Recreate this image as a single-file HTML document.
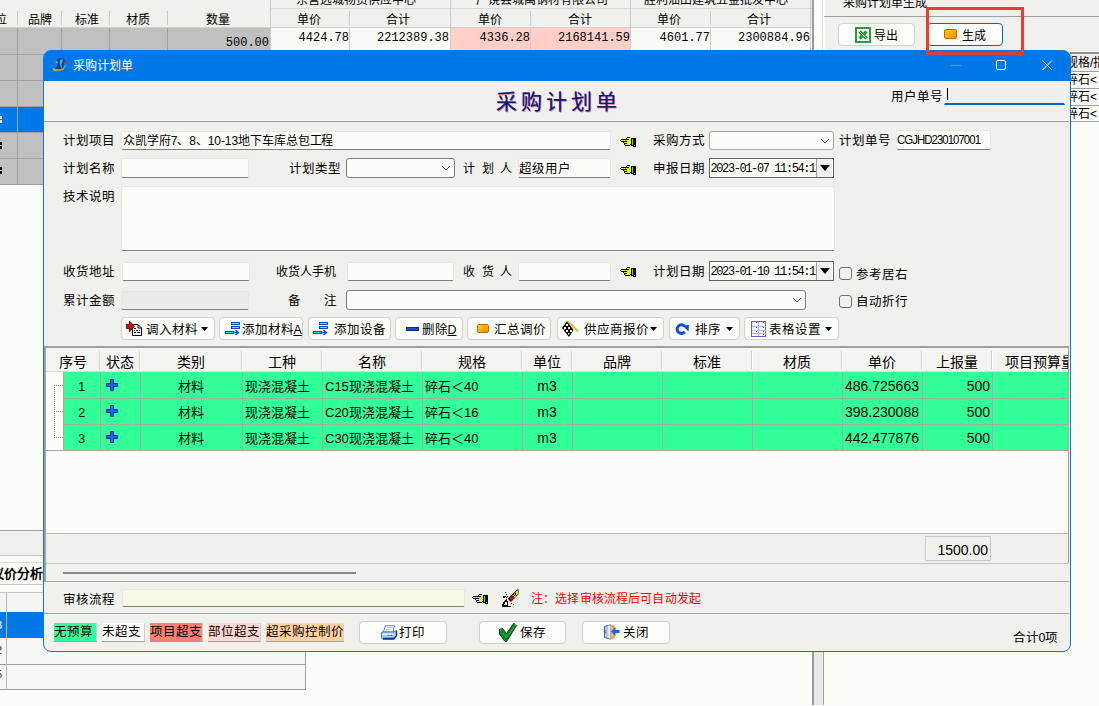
<!DOCTYPE html>
<html lang="zh-CN">
<head>
<meta charset="utf-8">
<style>
*{box-sizing:border-box}
html,body{margin:0;padding:0}
body{width:1099px;height:706px;position:relative;overflow:hidden;background:#fdfdf8;font-family:"Liberation Sans",sans-serif;font-size:12px;color:#000}
.a{position:absolute}
.t{position:absolute;white-space:nowrap;line-height:1}
.hl{position:absolute;height:1px;background:#a0a0a0}
.vl{position:absolute;width:1px;background:#a0a0a0}
.inp{position:absolute;background:#fdfdf8;border:1px solid #e3e3e0;border-bottom:1px solid #7c7c7c;border-radius:2px}
.cmb{position:absolute;background:#fdfdf8;border:1px solid #7a7a7a;border-radius:3px}
.btn{position:absolute;background:#fdfdf9;border:1px solid #d3d3d0;border-radius:4px}
.mono{font-family:"Liberation Mono",monospace}
</style>
</head>
<body>
<!-- ===== background app: left grid ===== -->
<div class="a" style="left:0;top:0;width:812px;height:28px;background:#f0f0ec"></div>
<div class="hl" style="left:270px;top:8px;width:542px;background:#d8d8d4"></div>
<div class="hl" style="left:0;top:27px;width:812px;background:#d0d0cc"></div>
<div class="t" style="left:296px;top:-6px;font-size:12px">东营远城物资供应中心</div>
<div class="t" style="left:476px;top:-6px;font-size:12px">广饶县城禹钢材有限公司</div>
<div class="t" style="left:644px;top:-6px;font-size:12px">胜利油田建筑五金批发中心</div>
<div class="t" style="left:-5px;top:14px">位</div>
<div class="t" style="left:28px;top:14px">品牌</div>
<div class="t" style="left:75px;top:14px">标准</div>
<div class="t" style="left:126px;top:14px">材质</div>
<div class="t" style="left:206px;top:14px">数量</div>
<div class="t" style="left:297px;top:14px">单价</div>
<div class="t" style="left:386px;top:14px">合计</div>
<div class="t" style="left:478px;top:14px">单价</div>
<div class="t" style="left:568px;top:14px">合计</div>
<div class="t" style="left:657px;top:14px">单价</div>
<div class="t" style="left:747px;top:14px">合计</div>
<!-- header separators -->
<div class="vl" style="left:17px;top:11px;height:14px;background:#c8c8c4"></div>
<div class="vl" style="left:61px;top:11px;height:14px;background:#c8c8c4"></div>
<div class="vl" style="left:109px;top:11px;height:14px;background:#c8c8c4"></div>
<div class="vl" style="left:167px;top:11px;height:14px;background:#c8c8c4"></div>
<div class="vl" style="left:270px;top:0;height:28px;background:#c8c8c4"></div>
<div class="vl" style="left:349px;top:11px;height:14px;background:#c8c8c4"></div>
<div class="vl" style="left:450px;top:0;height:28px;background:#c8c8c4"></div>
<div class="vl" style="left:530px;top:11px;height:14px;background:#c8c8c4"></div>
<div class="vl" style="left:630px;top:0;height:28px;background:#c8c8c4"></div>
<div class="vl" style="left:710px;top:11px;height:14px;background:#c8c8c4"></div>
<div class="vl" style="left:810px;top:0;height:28px;background:#c8c8c4"></div>
<!-- data rows -->
<div class="a" style="left:0;top:28px;width:270px;height:156px;background:#c0c0c0"></div>
<div class="a" style="left:0;top:107px;width:270px;height:25px;background:#0078e8"></div>
<div class="a" style="left:270px;top:28px;width:180px;height:22px;background:#fbfbf6"></div>
<div class="a" style="left:450px;top:28px;width:180px;height:22px;background:#ffcfc8"></div>
<div class="a" style="left:630px;top:28px;width:180px;height:22px;background:#fbfbf6"></div>
<div class="hl" style="left:0;top:54px;width:44px"></div>
<div class="hl" style="left:0;top:80px;width:44px"></div>
<div class="hl" style="left:0;top:106px;width:44px"></div>
<div class="hl" style="left:0;top:132px;width:44px"></div>
<div class="hl" style="left:0;top:158px;width:44px"></div>
<div class="hl" style="left:0;top:184px;width:44px"></div>
<div class="vl" style="left:17px;top:28px;height:156px"></div>
<div class="vl" style="left:61px;top:28px;height:22px"></div>
<div class="vl" style="left:109px;top:28px;height:22px"></div>
<div class="vl" style="left:167px;top:28px;height:22px"></div>
<div class="vl" style="left:270px;top:28px;height:22px;background:#d0d0cc"></div>
<div class="vl" style="left:349px;top:28px;height:22px;background:#d0d0cc"></div>
<div class="vl" style="left:450px;top:28px;height:22px;background:#d0d0cc"></div>
<div class="vl" style="left:530px;top:28px;height:22px;background:#d0d0cc"></div>
<div class="vl" style="left:630px;top:28px;height:22px;background:#d0d0cc"></div>
<div class="vl" style="left:710px;top:28px;height:22px;background:#d0d0cc"></div>
<div class="vl" style="left:810px;top:28px;height:22px;background:#d0d0cc"></div>
<div class="t mono" style="left:167px;width:102px;text-align:right;top:37px">500.00</div>
<div class="t mono" style="left:270px;width:79px;text-align:right;top:32px">4424.78</div>
<div class="t mono" style="left:349px;width:100px;text-align:right;top:32px">2212389.38</div>
<div class="t mono" style="left:450px;width:80px;text-align:right;top:32px">4336.28</div>
<div class="t mono" style="left:540px;width:90px;text-align:right;top:32px">2168141.59</div>
<div class="t mono" style="left:630px;width:80px;text-align:right;top:32px">4601.77</div>
<div class="t mono" style="left:710px;width:100px;text-align:right;top:32px">2300884.96</div>

<!-- left strip bottom -->
<div class="a" style="left:0;top:531px;width:44px;height:25px;background:#f0f0ec"></div>
<div class="hl" style="left:0;top:530px;width:44px"></div>
<div class="hl" style="left:0;top:555px;width:44px;background:#c8c8c4"></div>
<div class="hl" style="left:0;top:562px;width:44px;background:#d8d8d4"></div>
<div class="t" style="left:-9px;top:567px;font-weight:bold;font-size:13px">议价分析</div>
<div class="a" style="left:0;top:116px;width:2px;height:3px;background:#fff"></div><div class="a" style="left:0;top:120px;width:2px;height:3px;background:#fff"></div>
<div class="a" style="left:0;top:142px;width:2px;height:3px;background:#000"></div><div class="a" style="left:0;top:146px;width:2px;height:3px;background:#000"></div>
<div class="a" style="left:0;top:167px;width:2px;height:3px;background:#000"></div><div class="a" style="left:0;top:171px;width:2px;height:3px;background:#000"></div>
<div class="hl" style="left:0;top:584px;width:44px;background:#c8c8c4"></div>
<div class="hl" style="left:0;top:592px;width:44px;background:#c8c8c4"></div>
<div class="a" style="left:0;top:593px;width:44px;height:19px;background:#f5f5f1"></div>
<div class="a" style="left:0;top:612px;width:305px;height:26px;background:#0078e8"></div>
<div class="a" style="left:0;top:638px;width:305px;height:52px;background:#f6f6f2"></div>
<div class="hl" style="left:0;top:664px;width:305px"></div>
<div class="hl" style="left:0;top:689px;width:306px"></div>
<div class="vl" style="left:6px;top:593px;height:97px;background:#b8b8b4"></div>
<div class="vl" style="left:305px;top:638px;height:52px"></div>

<div class="t" style="left:-4px;top:620px;font-size:11px;color:#fff">3</div>
<div class="t" style="left:-4px;top:645px;font-size:11px;color:#333">2</div>
<div class="t" style="left:-4px;top:669px;font-size:11px;color:#333">5</div>
<!-- splitter -->
<div class="a" style="left:812px;top:0;width:2px;height:705px;background:#9a9a9a"></div>
<div class="a" style="left:814px;top:651px;width:9px;height:54px;background:#e8e8e6"></div>
<div class="vl" style="left:822px;top:0;height:651px;background:#e0e0dc"></div>
<div class="vl" style="left:823px;top:651px;height:54px;background:#a0a0a0"></div>

<!-- right panel -->
<div class="a" style="left:825px;top:0;width:274px;height:52px;background:#f0f0ec"></div>
<div class="hl" style="left:824px;top:16px;width:275px;background:#a0a0a0"></div>
<div class="t" style="left:843px;top:-3px">采购计划单生成</div>
<div class="btn" style="left:838px;top:23px;width:77px;height:23px"></div>
<div class="t" style="left:874px;top:30px">导出</div>
<div class="btn" style="left:927px;top:23px;width:76px;height:23px;border:1px solid #0067c0"></div>
<div class="a" style="left:944px;top:29px;width:13px;height:10px;border-radius:2px;background:linear-gradient(135deg,#ffd000,#ff8c00);border:1px solid #d06000"></div>
<div class="t" style="left:962px;top:30px">生成</div>
<svg class="a" style="left:855px;top:27px" width="16" height="16" viewBox="0 0 16 16">
<rect x="1" y="1" width="14" height="14" fill="#fff" stroke="#2a9a3a" stroke-width="2"/>
<path d="M4.5 4.5 L11.5 11.5 M11.5 4.5 L4.5 11.5" stroke="#2a9a3a" stroke-width="3.2"/>
<path d="M4 4 L10.5 10.5" stroke="#f0fff0" stroke-width="0.9"/>
</svg>
<!-- right grid -->
<div class="a" style="left:1070px;top:52px;width:29px;height:2px;background:#909090"></div>
<div class="a" style="left:1070px;top:54px;width:29px;height:17px;background:#f0f0ec"></div>
<div class="hl" style="left:1070px;top:71px;width:29px"></div>
<div class="hl" style="left:1070px;top:88px;width:29px"></div>
<div class="hl" style="left:1070px;top:105px;width:29px"></div>
<div class="hl" style="left:1070px;top:121px;width:29px"></div>
<div class="t" style="left:1066px;top:57px">规格/指</div>
<div class="t" style="left:1066px;top:74px">碎石&lt;</div>
<div class="t" style="left:1066px;top:91px">碎石&lt;</div>
<div class="t" style="left:1066px;top:108px">碎石&lt;</div>

<!-- red highlight -->


<div class="a" style="left:43px;top:50px;width:1028px;height:602px;border:1px solid #0a78e0;border-radius:8px;background:linear-gradient(#0078e8 0 30px,#f0f0ec 30px)"></div>
<svg class="a" style="left:52px;top:56px" width="18" height="18" viewBox="0 0 18 18">
<path d="M7 2.5 C10 2 13 2.5 12.8 4.5 C12.5 6.5 11 8 11.5 10 C12 12 10.5 14 8.5 14 C6 14 4.5 13 4.5 11.5 C4.5 10 6 9.5 5 8 C4 6.5 4 4 7 2.5 Z" fill="#0c3484"/>
<path d="M8.8 3.3 C10.8 3 11.8 4 10.8 5.5 C9.8 7 9.3 8 9.8 10 C10.3 11.5 9.8 12.8 8.8 13.2 C9.3 11.5 8.3 10 7.8 8.5 C7.3 7 7.3 4.5 8.8 3.3 Z" fill="#22b4f0"/>
<ellipse cx="4.9" cy="6.3" rx="0.9" ry="1.4" fill="#48c8ff"/>
<path d="M1 11.8 L1.2 14.3 L2.5 15 L9 14.6 L11.5 13.2 L14 9.4 L13.4 9 L11 12.2 L9 13.2 L3.2 13.6 L2 12.8 Z" fill="#ffb400"/>
<circle cx="14.3" cy="6.4" r="1.2" fill="#f02020"/>
</svg>
<div class="t" style="left:73px;top:59.995px;font-size:12.01px;color:#fff;">采购计划单</div>
<div class="a" style="left:951px;top:65px;width:10px;height:1px;background:#4d9de6"></div>
<div class="a" style="left:996px;top:60px;width:10px;height:10px;border:1px solid #fff;border-radius:2px"></div>
<svg class="a" style="left:1042px;top:60px" width="11" height="11"><path d="M0.5 0.5 L10 10 M10 0.5 L0.5 10" stroke="#fff" stroke-width="1"/></svg>
<div class="a" style="left:44px;top:121px;width:1025px;height:1px;background:#a0a0a0"></div>
<div class="a" style="left:44px;top:120px;width:1025px;height:1px;background:#f8f8f5"></div>
<div class="t" style="left:496px;top:92px;font-family:'Liberation Serif',serif;font-size:21px;font-weight:500;color:#18187a;letter-spacing:4px;text-shadow:0.3px 0 0 rgba(24,24,122,0.7),0.8px 0.6px 0 rgba(200,30,70,0.45)">采购计划单</div>
<div class="t" style="left:890.5px;top:91.0px;font-size:12.5px;color:#000;">用户单号</div>
<div class="a" style="left:944px;top:86px;width:121px;height:19px;background:#efefeb;border:1px solid #fafaf8;border-bottom:2px solid #0067c0"></div>
<div class="a" style="left:947px;top:88px;width:1px;height:12px;background:#000"></div>
<div class="t" style="left:62.5px;top:134.5px;font-size:12.5px;color:#000;">计划项目</div>
<div class="a" style="left:121px;top:131px;width:490px;height:19px;background:#fdfdf8;border:1px solid #e6e6e2;border-bottom:1px solid #7f7f7f;border-radius:2px"></div>
<div class="t" style="left:123px;top:134.995px;font-size:12.01px;color:#000;letter-spacing:-0.08px">众凯学府7、8、10-13地下车库总包工程</div>
<svg class="a" style="left:620px;top:137px" width="16" height="10" viewBox="0 0 16 10" shape-rendering="crispEdges"><rect x="7" y="0" width="3" height="1" fill="#000"/><rect x="6" y="1" width="1" height="1" fill="#000"/><rect x="7" y="1" width="1" height="1" fill="#d4f000"/><rect x="8" y="1" width="1" height="1" fill="#f4fab0"/><rect x="9" y="1" width="1" height="1" fill="#d4f000"/><rect x="11" y="1" width="5" height="1" fill="#000"/><rect x="1" y="2" width="8" height="1" fill="#000"/><rect x="9" y="2" width="2" height="1" fill="#d4f000"/><rect x="11" y="2" width="1" height="1" fill="#000"/><rect x="12" y="2" width="1" height="1" fill="#00eef8"/><rect x="13" y="2" width="3" height="1" fill="#000"/><rect x="0" y="3" width="1" height="1" fill="#000"/><rect x="1" y="3" width="1" height="1" fill="#d4f000"/><rect x="2" y="3" width="1" height="1" fill="#f4fab0"/><rect x="3" y="3" width="1" height="1" fill="#d4f000"/><rect x="4" y="3" width="1" height="1" fill="#f4fab0"/><rect x="5" y="3" width="1" height="1" fill="#d4f000"/><rect x="6" y="3" width="1" height="1" fill="#f4fab0"/><rect x="7" y="3" width="4" height="1" fill="#d4f000"/><rect x="11" y="3" width="1" height="1" fill="#000"/><rect x="12" y="3" width="1" height="1" fill="#00eef8"/><rect x="13" y="3" width="3" height="1" fill="#000"/><rect x="1" y="4" width="6" height="1" fill="#000"/><rect x="7" y="4" width="1" height="1" fill="#d4f000"/><rect x="8" y="4" width="1" height="1" fill="#f4fab0"/><rect x="9" y="4" width="1" height="1" fill="#d4f000"/><rect x="10" y="4" width="1" height="1" fill="#f4fab0"/><rect x="11" y="4" width="1" height="1" fill="#000"/><rect x="12" y="4" width="1" height="1" fill="#00eef8"/><rect x="13" y="4" width="3" height="1" fill="#000"/><rect x="3" y="5" width="1" height="1" fill="#000"/><rect x="4" y="5" width="1" height="1" fill="#d4f000"/><rect x="5" y="5" width="1" height="1" fill="#f4fab0"/><rect x="6" y="5" width="1" height="1" fill="#d4f000"/><rect x="7" y="5" width="1" height="1" fill="#f4fab0"/><rect x="8" y="5" width="1" height="1" fill="#d4f000"/><rect x="9" y="5" width="1" height="1" fill="#f4fab0"/><rect x="10" y="5" width="1" height="1" fill="#d4f000"/><rect x="11" y="5" width="1" height="1" fill="#000"/><rect x="12" y="5" width="1" height="1" fill="#00eef8"/><rect x="13" y="5" width="3" height="1" fill="#000"/><rect x="4" y="6" width="3" height="1" fill="#000"/><rect x="7" y="6" width="1" height="1" fill="#d4f000"/><rect x="8" y="6" width="1" height="1" fill="#f4fab0"/><rect x="9" y="6" width="1" height="1" fill="#d4f000"/><rect x="10" y="6" width="1" height="1" fill="#f4fab0"/><rect x="11" y="6" width="1" height="1" fill="#000"/><rect x="12" y="6" width="1" height="1" fill="#00eef8"/><rect x="13" y="6" width="3" height="1" fill="#000"/><rect x="4" y="7" width="1" height="1" fill="#000"/><rect x="5" y="7" width="1" height="1" fill="#d4f000"/><rect x="6" y="7" width="1" height="1" fill="#f4fab0"/><rect x="7" y="7" width="1" height="1" fill="#d4f000"/><rect x="8" y="7" width="1" height="1" fill="#f4fab0"/><rect x="9" y="7" width="1" height="1" fill="#d4f000"/><rect x="10" y="7" width="2" height="1" fill="#000"/><rect x="12" y="7" width="1" height="1" fill="#00eef8"/><rect x="13" y="7" width="3" height="1" fill="#000"/><rect x="5" y="8" width="5" height="1" fill="#000"/><rect x="11" y="8" width="3" height="1" fill="#000"/><rect x="14" y="8" width="1" height="1" fill="#d4f000"/><rect x="15" y="8" width="1" height="1" fill="#000"/><rect x="13" y="9" width="3" height="1" fill="#000"/></svg>
<div class="t" style="left:652.5px;top:134.5px;font-size:12.5px;color:#000;">采购方式</div>
<div class="a" style="left:709px;top:131px;width:125px;height:19px;background:#fdfdf8;border:1px solid #a4a4a0;border-radius:3px"></div>
<svg class="a" style="left:820px;top:137.5px" width="10" height="6"><path d="M1 1 L5 5 L9 1" fill="none" stroke="#505050" stroke-width="1"/></svg>
<div class="t" style="left:838.5px;top:134.5px;font-size:12.5px;color:#000;">计划单号</div>
<div class="a" style="left:896px;top:130px;width:95px;height:20px;background:#fdfdf8;border:1px solid #e6e6e2;border-bottom:1px solid #7f7f7f;border-radius:2px"></div>
<div class="t" style="left:897px;top:134px;font-size:12px;letter-spacing:-1px;transform:scaleX(0.95);transform-origin:0 0">CGJHD230107001</div>
<div class="t" style="left:62.5px;top:162.5px;font-size:12.5px;color:#000;">计划名称</div>
<div class="a" style="left:121px;top:158px;width:128px;height:20px;background:#fdfdf8;border:1px solid #e6e6e2;border-bottom:1px solid #7f7f7f;border-radius:2px"></div>
<div class="t" style="left:288.5px;top:162.5px;font-size:12.5px;color:#000;">计划类型</div>
<div class="a" style="left:346px;top:158px;width:109px;height:20px;background:#fdfdf8;border:1px solid #7a7a7a;border-radius:3px"></div>
<svg class="a" style="left:441px;top:165.0px" width="10" height="6"><path d="M1 1 L5 5 L9 1" fill="none" stroke="#505050" stroke-width="1"/></svg>
<div class="t" style="left:463px;top:162.995px;font-size:12.01px;color:#000;">计&nbsp;&nbsp;划&nbsp;&nbsp;人</div>
<div class="a" style="left:518px;top:158px;width:93px;height:20px;background:#fdfdf8;border:1px solid #e6e6e2;border-bottom:1px solid #7f7f7f;border-radius:2px"></div>
<div class="t" style="left:518.5px;top:162.5px;font-size:12.5px;color:#000;">超级用户</div>
<svg class="a" style="left:620px;top:165px" width="16" height="10" viewBox="0 0 16 10" shape-rendering="crispEdges"><rect x="7" y="0" width="3" height="1" fill="#000"/><rect x="6" y="1" width="1" height="1" fill="#000"/><rect x="7" y="1" width="1" height="1" fill="#d4f000"/><rect x="8" y="1" width="1" height="1" fill="#f4fab0"/><rect x="9" y="1" width="1" height="1" fill="#d4f000"/><rect x="11" y="1" width="5" height="1" fill="#000"/><rect x="1" y="2" width="8" height="1" fill="#000"/><rect x="9" y="2" width="2" height="1" fill="#d4f000"/><rect x="11" y="2" width="1" height="1" fill="#000"/><rect x="12" y="2" width="1" height="1" fill="#00eef8"/><rect x="13" y="2" width="3" height="1" fill="#000"/><rect x="0" y="3" width="1" height="1" fill="#000"/><rect x="1" y="3" width="1" height="1" fill="#d4f000"/><rect x="2" y="3" width="1" height="1" fill="#f4fab0"/><rect x="3" y="3" width="1" height="1" fill="#d4f000"/><rect x="4" y="3" width="1" height="1" fill="#f4fab0"/><rect x="5" y="3" width="1" height="1" fill="#d4f000"/><rect x="6" y="3" width="1" height="1" fill="#f4fab0"/><rect x="7" y="3" width="4" height="1" fill="#d4f000"/><rect x="11" y="3" width="1" height="1" fill="#000"/><rect x="12" y="3" width="1" height="1" fill="#00eef8"/><rect x="13" y="3" width="3" height="1" fill="#000"/><rect x="1" y="4" width="6" height="1" fill="#000"/><rect x="7" y="4" width="1" height="1" fill="#d4f000"/><rect x="8" y="4" width="1" height="1" fill="#f4fab0"/><rect x="9" y="4" width="1" height="1" fill="#d4f000"/><rect x="10" y="4" width="1" height="1" fill="#f4fab0"/><rect x="11" y="4" width="1" height="1" fill="#000"/><rect x="12" y="4" width="1" height="1" fill="#00eef8"/><rect x="13" y="4" width="3" height="1" fill="#000"/><rect x="3" y="5" width="1" height="1" fill="#000"/><rect x="4" y="5" width="1" height="1" fill="#d4f000"/><rect x="5" y="5" width="1" height="1" fill="#f4fab0"/><rect x="6" y="5" width="1" height="1" fill="#d4f000"/><rect x="7" y="5" width="1" height="1" fill="#f4fab0"/><rect x="8" y="5" width="1" height="1" fill="#d4f000"/><rect x="9" y="5" width="1" height="1" fill="#f4fab0"/><rect x="10" y="5" width="1" height="1" fill="#d4f000"/><rect x="11" y="5" width="1" height="1" fill="#000"/><rect x="12" y="5" width="1" height="1" fill="#00eef8"/><rect x="13" y="5" width="3" height="1" fill="#000"/><rect x="4" y="6" width="3" height="1" fill="#000"/><rect x="7" y="6" width="1" height="1" fill="#d4f000"/><rect x="8" y="6" width="1" height="1" fill="#f4fab0"/><rect x="9" y="6" width="1" height="1" fill="#d4f000"/><rect x="10" y="6" width="1" height="1" fill="#f4fab0"/><rect x="11" y="6" width="1" height="1" fill="#000"/><rect x="12" y="6" width="1" height="1" fill="#00eef8"/><rect x="13" y="6" width="3" height="1" fill="#000"/><rect x="4" y="7" width="1" height="1" fill="#000"/><rect x="5" y="7" width="1" height="1" fill="#d4f000"/><rect x="6" y="7" width="1" height="1" fill="#f4fab0"/><rect x="7" y="7" width="1" height="1" fill="#d4f000"/><rect x="8" y="7" width="1" height="1" fill="#f4fab0"/><rect x="9" y="7" width="1" height="1" fill="#d4f000"/><rect x="10" y="7" width="2" height="1" fill="#000"/><rect x="12" y="7" width="1" height="1" fill="#00eef8"/><rect x="13" y="7" width="3" height="1" fill="#000"/><rect x="5" y="8" width="5" height="1" fill="#000"/><rect x="11" y="8" width="3" height="1" fill="#000"/><rect x="14" y="8" width="1" height="1" fill="#d4f000"/><rect x="15" y="8" width="1" height="1" fill="#000"/><rect x="13" y="9" width="3" height="1" fill="#000"/></svg>
<div class="t" style="left:652.5px;top:162.5px;font-size:12.5px;color:#000;">申报日期</div>
<div class="a" style="left:709px;top:158px;width:125px;height:20px;background:#fdfdf8;border:1px solid #646464"></div>
<div class="t mono" style="left:710.5px;top:162.5px;font-size:12px;width:106px;overflow:hidden;letter-spacing:-1.4px">2023-01-07 11:54:1</div>
<div class="a" style="left:816px;top:159px;width:17px;height:18px;background:#f0f0ec;border-left:1px solid #a0a0a0;border-right:1px solid #fff"></div>
<svg class="a" style="left:820px;top:165.0px" width="11" height="7"><path d="M0 0 H10 L5 6 Z" fill="#000"/></svg>
<div class="t" style="left:62.5px;top:190.5px;font-size:12.5px;color:#000;">技术说明</div>
<div class="a" style="left:121px;top:186px;width:714px;height:65px;background:#fdfdf8;border:1px solid #e6e6e2;border-bottom:1px solid #7f7f7f;border-radius:2px"></div>
<div class="t" style="left:62.5px;top:265.5px;font-size:12.5px;color:#000;">收货地址</div>
<div class="a" style="left:122px;top:262px;width:128px;height:19px;background:#fdfdf8;border:1px solid #e6e6e2;border-bottom:1px solid #7f7f7f;border-radius:2px"></div>
<div class="t" style="left:276px;top:265.995px;font-size:12.01px;color:#000;">收货人手机</div>
<div class="a" style="left:347px;top:262px;width:107px;height:19px;background:#fdfdf8;border:1px solid #e6e6e2;border-bottom:1px solid #7f7f7f;border-radius:2px"></div>
<div class="t" style="left:463px;top:265.995px;font-size:12.01px;color:#000;">收&nbsp;&nbsp;货&nbsp;&nbsp;人</div>
<div class="a" style="left:518px;top:262px;width:93px;height:19px;background:#fdfdf8;border:1px solid #e6e6e2;border-bottom:1px solid #7f7f7f;border-radius:2px"></div>
<svg class="a" style="left:620px;top:267px" width="16" height="10" viewBox="0 0 16 10" shape-rendering="crispEdges"><rect x="7" y="0" width="3" height="1" fill="#000"/><rect x="6" y="1" width="1" height="1" fill="#000"/><rect x="7" y="1" width="1" height="1" fill="#d4f000"/><rect x="8" y="1" width="1" height="1" fill="#f4fab0"/><rect x="9" y="1" width="1" height="1" fill="#d4f000"/><rect x="11" y="1" width="5" height="1" fill="#000"/><rect x="1" y="2" width="8" height="1" fill="#000"/><rect x="9" y="2" width="2" height="1" fill="#d4f000"/><rect x="11" y="2" width="1" height="1" fill="#000"/><rect x="12" y="2" width="1" height="1" fill="#00eef8"/><rect x="13" y="2" width="3" height="1" fill="#000"/><rect x="0" y="3" width="1" height="1" fill="#000"/><rect x="1" y="3" width="1" height="1" fill="#d4f000"/><rect x="2" y="3" width="1" height="1" fill="#f4fab0"/><rect x="3" y="3" width="1" height="1" fill="#d4f000"/><rect x="4" y="3" width="1" height="1" fill="#f4fab0"/><rect x="5" y="3" width="1" height="1" fill="#d4f000"/><rect x="6" y="3" width="1" height="1" fill="#f4fab0"/><rect x="7" y="3" width="4" height="1" fill="#d4f000"/><rect x="11" y="3" width="1" height="1" fill="#000"/><rect x="12" y="3" width="1" height="1" fill="#00eef8"/><rect x="13" y="3" width="3" height="1" fill="#000"/><rect x="1" y="4" width="6" height="1" fill="#000"/><rect x="7" y="4" width="1" height="1" fill="#d4f000"/><rect x="8" y="4" width="1" height="1" fill="#f4fab0"/><rect x="9" y="4" width="1" height="1" fill="#d4f000"/><rect x="10" y="4" width="1" height="1" fill="#f4fab0"/><rect x="11" y="4" width="1" height="1" fill="#000"/><rect x="12" y="4" width="1" height="1" fill="#00eef8"/><rect x="13" y="4" width="3" height="1" fill="#000"/><rect x="3" y="5" width="1" height="1" fill="#000"/><rect x="4" y="5" width="1" height="1" fill="#d4f000"/><rect x="5" y="5" width="1" height="1" fill="#f4fab0"/><rect x="6" y="5" width="1" height="1" fill="#d4f000"/><rect x="7" y="5" width="1" height="1" fill="#f4fab0"/><rect x="8" y="5" width="1" height="1" fill="#d4f000"/><rect x="9" y="5" width="1" height="1" fill="#f4fab0"/><rect x="10" y="5" width="1" height="1" fill="#d4f000"/><rect x="11" y="5" width="1" height="1" fill="#000"/><rect x="12" y="5" width="1" height="1" fill="#00eef8"/><rect x="13" y="5" width="3" height="1" fill="#000"/><rect x="4" y="6" width="3" height="1" fill="#000"/><rect x="7" y="6" width="1" height="1" fill="#d4f000"/><rect x="8" y="6" width="1" height="1" fill="#f4fab0"/><rect x="9" y="6" width="1" height="1" fill="#d4f000"/><rect x="10" y="6" width="1" height="1" fill="#f4fab0"/><rect x="11" y="6" width="1" height="1" fill="#000"/><rect x="12" y="6" width="1" height="1" fill="#00eef8"/><rect x="13" y="6" width="3" height="1" fill="#000"/><rect x="4" y="7" width="1" height="1" fill="#000"/><rect x="5" y="7" width="1" height="1" fill="#d4f000"/><rect x="6" y="7" width="1" height="1" fill="#f4fab0"/><rect x="7" y="7" width="1" height="1" fill="#d4f000"/><rect x="8" y="7" width="1" height="1" fill="#f4fab0"/><rect x="9" y="7" width="1" height="1" fill="#d4f000"/><rect x="10" y="7" width="2" height="1" fill="#000"/><rect x="12" y="7" width="1" height="1" fill="#00eef8"/><rect x="13" y="7" width="3" height="1" fill="#000"/><rect x="5" y="8" width="5" height="1" fill="#000"/><rect x="11" y="8" width="3" height="1" fill="#000"/><rect x="14" y="8" width="1" height="1" fill="#d4f000"/><rect x="15" y="8" width="1" height="1" fill="#000"/><rect x="13" y="9" width="3" height="1" fill="#000"/></svg>
<div class="t" style="left:652.5px;top:265.5px;font-size:12.5px;color:#000;">计划日期</div>
<div class="a" style="left:709px;top:261px;width:125px;height:20px;background:#fdfdf8;border:1px solid #646464"></div>
<div class="t mono" style="left:710.5px;top:265.5px;font-size:12px;width:106px;overflow:hidden;letter-spacing:-1.4px">2023-01-10 11:54:1</div>
<div class="a" style="left:816px;top:262px;width:17px;height:18px;background:#f0f0ec;border-left:1px solid #a0a0a0;border-right:1px solid #fff"></div>
<svg class="a" style="left:820px;top:268.0px" width="11" height="7"><path d="M0 0 H10 L5 6 Z" fill="#000"/></svg>
<div class="a" style="left:839px;top:267px;width:13px;height:13px;background:#f0f0ec;border:1px solid #707070;border-radius:3px"></div>
<div class="t" style="left:855.5px;top:268.5px;font-size:12.5px;color:#000;">参考居右</div>
<div class="t" style="left:62.5px;top:294.5px;font-size:12.5px;color:#000;">累计金额</div>
<div class="a" style="left:121px;top:291px;width:128px;height:19px;background:#ebebe7;border:1px solid #e6e6e2;border-bottom:1px solid #7f7f7f;border-radius:2px"></div>
<div class="t" style="left:287.5px;top:294.5px;font-size:12.5px;color:#000;">备</div>
<div class="t" style="left:323.5px;top:294.5px;font-size:12.5px;color:#000;">注</div>
<div class="a" style="left:346px;top:290px;width:460px;height:20px;background:#fdfdf8;border:1px solid #7a7a7a;border-radius:3px"></div>
<svg class="a" style="left:792px;top:297.0px" width="10" height="6"><path d="M1 1 L5 5 L9 1" fill="none" stroke="#505050" stroke-width="1"/></svg>
<div class="a" style="left:839px;top:295px;width:13px;height:13px;background:#f0f0ec;border:1px solid #707070;border-radius:3px"></div>
<div class="t" style="left:855.5px;top:295.5px;font-size:12.5px;color:#000;">自动折行</div>
<div class="a" style="left:121px;top:317px;width:94px;height:23px;background:#fdfdf9;border:1px solid #d0d0cc;border-radius:4px"></div>
<div class="t" style="left:145.5px;top:323.5px;font-size:12.5px;color:#000;">调入材料</div>
<svg class="a" style="left:201px;top:327px" width="8" height="4"><path d="M0 0 H7 L3.5 4 Z" fill="#000"/></svg>
<div class="a" style="left:219px;top:317px;width:84px;height:23px;background:#fdfdf9;border:1px solid #d0d0cc;border-radius:4px"></div>
<div class="t" style="left:241.5px;top:323.5px;font-size:12.5px;color:#000;">添加材料<u>A</u></div>
<div class="a" style="left:308px;top:317px;width:83px;height:23px;background:#fdfdf9;border:1px solid #d0d0cc;border-radius:4px"></div>
<div class="t" style="left:333.5px;top:323.5px;font-size:12.5px;color:#000;">添加设备</div>
<div class="a" style="left:395px;top:317px;width:68px;height:23px;background:#fdfdf9;border:1px solid #d0d0cc;border-radius:4px"></div>
<div class="t" style="left:421.5px;top:323.5px;font-size:12.5px;color:#000;">删除<u>D</u></div>
<div class="a" style="left:467px;top:317px;width:84px;height:23px;background:#fdfdf9;border:1px solid #d0d0cc;border-radius:4px"></div>
<div class="t" style="left:493.5px;top:323.5px;font-size:12.5px;color:#000;">汇总调价</div>
<div class="a" style="left:557px;top:317px;width:107px;height:23px;background:#fdfdf9;border:1px solid #d0d0cc;border-radius:4px"></div>
<div class="t" style="left:583.5px;top:323.5px;font-size:12.5px;color:#000;">供应商报价</div>
<svg class="a" style="left:650px;top:327px" width="8" height="4"><path d="M0 0 H7 L3.5 4 Z" fill="#000"/></svg>
<div class="a" style="left:669px;top:317px;width:71px;height:23px;background:#fdfdf9;border:1px solid #d0d0cc;border-radius:4px"></div>
<div class="t" style="left:694.5px;top:323.5px;font-size:12.5px;color:#000;">排序</div>
<svg class="a" style="left:726px;top:327px" width="8" height="4"><path d="M0 0 H7 L3.5 4 Z" fill="#000"/></svg>
<div class="a" style="left:744px;top:317px;width:95px;height:23px;background:#fdfdf9;border:1px solid #d0d0cc;border-radius:4px"></div>
<div class="t" style="left:768.5px;top:323.5px;font-size:12.5px;color:#000;">表格设置</div>
<svg class="a" style="left:825px;top:327px" width="8" height="4"><path d="M0 0 H7 L3.5 4 Z" fill="#000"/></svg>
<svg class="a" style="left:122px;top:318px" width="24" height="22" viewBox="0 0 24 22">
<path d="M10.5 6.5 H16 L19.5 10 V17.5 H10.5 Z" fill="#fff" stroke="#000" stroke-width="1"/>
<path d="M16 6.5 V10 H19.5" fill="none" stroke="#000" stroke-width="1"/>
<path d="M12 10.5 H14 M12 12.5 H13 M14 12.5 H16 M17 12.5 H18 M12 14.5 H14 M15 14.5 H18" stroke="#000" stroke-width="1"/>
<path d="M4.5 6.2 H7.5 V3 L12.5 8.3 L7.5 13.7 V10.5 H4.5 Z" fill="#f00000" stroke="#000" stroke-width="0.7"/>
</svg>
<svg class="a" style="left:225px;top:321px" width="16" height="15" viewBox="0 0 16 15">
<rect x="6.5" y="1.5" width="8" height="2" fill="#8cd0ff" stroke="#0a48d0" stroke-width="1"/>
<rect x="6.5" y="5.5" width="8" height="2" fill="#8cd0ff" stroke="#0a48d0" stroke-width="1"/>
<rect x="0.5" y="10.5" width="8" height="2" fill="#00f0ff" stroke="#0a48d0" stroke-width="1"/>
<path d="M8.5 11.5 H13 M10.5 9 L13.5 11.5 L10.5 14" fill="none" stroke="#0a48d0" stroke-width="1.3"/>
</svg>
<svg class="a" style="left:313px;top:321px" width="16" height="15" viewBox="0 0 16 15">
<rect x="6.5" y="1.5" width="8" height="2" fill="#8cd0ff" stroke="#0a48d0" stroke-width="1"/>
<rect x="6.5" y="5.5" width="8" height="2" fill="#8cd0ff" stroke="#0a48d0" stroke-width="1"/>
<rect x="0.5" y="10.5" width="8" height="2" fill="#00f0ff" stroke="#0a48d0" stroke-width="1"/>
<path d="M8.5 11.5 H13 M10.5 9 L13.5 11.5 L10.5 14" fill="none" stroke="#0a48d0" stroke-width="1.3"/>
</svg>
<div class="a" style="left:406px;top:327px;width:13px;height:4px;background:#1a50c8;border:1px solid #0a2a90"></div>
<div class="a" style="left:477px;top:324px;width:12px;height:9px;border-radius:2px;background:linear-gradient(135deg,#ffd020,#ff8a00);border:1px solid #d86800"></div>
<svg class="a" style="left:558px;top:318px" width="24" height="22" viewBox="0 0 24 22">
<polygon points="9,3 4,10 11,19 15.5,12" fill="#000"/>
<path d="M8 6h2v2h-2z M6 9h2v2h-2z M10 9h2v2h-2z M8 12h2v2h-2z M12 12h2v2h-2z M10 15h1.5v1.5h-1.5z M5.5 11h1v1h-1z" fill="#fff"/>
<path d="M9.5 3 L20 13.5" stroke="#f0b030" stroke-width="1.8"/>
</svg>
<svg class="a" style="left:674px;top:322px" width="17" height="14" viewBox="0 0 17 14">
<path d="M10.5 4.2 A4.3 4.3 0 1 0 10.8 9.8" fill="none" stroke="#0a50d8" stroke-width="3"/>
<path d="M8.5 3.5 L15 3 L14.5 9.5 Z" fill="#0a50d8"/>
</svg>
<svg class="a" style="left:751px;top:321px" width="16" height="16" viewBox="0 0 16 16" shape-rendering="crispEdges">
<rect x="0.5" y="0.5" width="14" height="15" fill="#fff" stroke="#6a5ad0"/>
<rect x="7" y="1" width="1" height="14" fill="#b8b0e8"/>
<rect x="1" y="5" width="14" height="1" fill="#b8b0e8"/><rect x="1" y="9" width="14" height="1" fill="#b8b0e8"/><rect x="1" y="12" width="14" height="1" fill="#b8b0e8"/>
<rect x="5" y="1" width="1" height="1" fill="#e00000"/><rect x="12" y="1" width="1" height="1" fill="#e00000"/>
<rect x="5" y="6" width="1" height="1" fill="#e00000"/><rect x="12" y="6" width="1" height="1" fill="#e00000"/>
<rect x="5" y="10" width="1" height="1" fill="#e00000"/><rect x="12" y="10" width="1" height="1" fill="#e00000"/>
<rect x="12" y="13" width="1" height="1" fill="#e00000"/>
</svg>
<div class="a" style="left:44px;top:346px;width:1025px;height:2px;background:#a0a0a0"></div>
<div class="a" style="left:44px;top:346px;width:2px;height:235px;background:#a0a0a0"></div>
<div class="a" style="left:46px;top:348px;width:1022px;height:24px;background:#f4f4f0"></div>
<div class="a" style="left:46px;top:371px;width:1022px;height:1px;background:#dcdcd8"></div>
<div class="a" style="left:46px;top:372px;width:1022px;height:161px;background:#fdfdf8"></div>
<div class="t" style="left:46px;width:54px;text-align:center;top:355.0px;font-size:14px;color:#000;">序号</div>
<div class="t" style="left:100px;width:40px;text-align:center;top:355.0px;font-size:14px;color:#000;">状态</div>
<div class="t" style="left:140px;width:102px;text-align:center;top:355.0px;font-size:14px;color:#000;">类别</div>
<div class="t" style="left:242px;width:80px;text-align:center;top:355.0px;font-size:14px;color:#000;">工种</div>
<div class="t" style="left:322px;width:100px;text-align:center;top:355.0px;font-size:14px;color:#000;">名称</div>
<div class="t" style="left:422px;width:100px;text-align:center;top:355.0px;font-size:14px;color:#000;">规格</div>
<div class="t" style="left:522px;width:50px;text-align:center;top:355.0px;font-size:14px;color:#000;">单位</div>
<div class="t" style="left:572px;width:90px;text-align:center;top:355.0px;font-size:14px;color:#000;">品牌</div>
<div class="t" style="left:662px;width:90px;text-align:center;top:355.0px;font-size:14px;color:#000;">标准</div>
<div class="t" style="left:752px;width:90px;text-align:center;top:355.0px;font-size:14px;color:#000;">材质</div>
<div class="t" style="left:842px;width:80px;text-align:center;top:355.0px;font-size:14px;color:#000;">单价</div>
<div class="t" style="left:922px;width:70px;text-align:center;top:355.0px;font-size:14px;color:#000;">上报量</div>
<div class="t" style="left:1005px;top:355px;width:63px;overflow:hidden;font-size:14px">项目预算量</div>
<div class="a" style="left:99px;top:351px;width:1px;height:18px;background:#d0d0cc"></div>
<div class="a" style="left:100px;top:351px;width:1px;height:18px;background:#fff"></div>
<div class="a" style="left:139px;top:351px;width:1px;height:18px;background:#d0d0cc"></div>
<div class="a" style="left:140px;top:351px;width:1px;height:18px;background:#fff"></div>
<div class="a" style="left:241px;top:351px;width:1px;height:18px;background:#d0d0cc"></div>
<div class="a" style="left:242px;top:351px;width:1px;height:18px;background:#fff"></div>
<div class="a" style="left:321px;top:351px;width:1px;height:18px;background:#d0d0cc"></div>
<div class="a" style="left:322px;top:351px;width:1px;height:18px;background:#fff"></div>
<div class="a" style="left:421px;top:351px;width:1px;height:18px;background:#d0d0cc"></div>
<div class="a" style="left:422px;top:351px;width:1px;height:18px;background:#fff"></div>
<div class="a" style="left:521px;top:351px;width:1px;height:18px;background:#d0d0cc"></div>
<div class="a" style="left:522px;top:351px;width:1px;height:18px;background:#fff"></div>
<div class="a" style="left:571px;top:351px;width:1px;height:18px;background:#d0d0cc"></div>
<div class="a" style="left:572px;top:351px;width:1px;height:18px;background:#fff"></div>
<div class="a" style="left:661px;top:351px;width:1px;height:18px;background:#d0d0cc"></div>
<div class="a" style="left:662px;top:351px;width:1px;height:18px;background:#fff"></div>
<div class="a" style="left:751px;top:351px;width:1px;height:18px;background:#d0d0cc"></div>
<div class="a" style="left:752px;top:351px;width:1px;height:18px;background:#fff"></div>
<div class="a" style="left:841px;top:351px;width:1px;height:18px;background:#d0d0cc"></div>
<div class="a" style="left:842px;top:351px;width:1px;height:18px;background:#fff"></div>
<div class="a" style="left:921px;top:351px;width:1px;height:18px;background:#d0d0cc"></div>
<div class="a" style="left:922px;top:351px;width:1px;height:18px;background:#fff"></div>
<div class="a" style="left:991px;top:351px;width:1px;height:18px;background:#d0d0cc"></div>
<div class="a" style="left:992px;top:351px;width:1px;height:18px;background:#fff"></div>
<div class="a" style="left:63px;top:372px;width:1005px;height:79px;background:#33ff99"></div>
<div class="a" style="left:63px;top:398px;width:1005px;height:1px;background:#a8a8a8"></div>
<div class="a" style="left:63px;top:424px;width:1005px;height:1px;background:#a8a8a8"></div>
<div class="a" style="left:46px;top:450px;width:1022px;height:1px;background:#a8a8a8"></div>
<div class="a" style="left:63px;top:372px;width:1px;height:79px;background:#a8a8a8"></div>
<div class="a" style="left:100px;top:372px;width:1px;height:79px;background:#a8a8a8"></div>
<div class="a" style="left:140px;top:372px;width:1px;height:79px;background:#a8a8a8"></div>
<div class="a" style="left:242px;top:372px;width:1px;height:79px;background:#a8a8a8"></div>
<div class="a" style="left:322px;top:372px;width:1px;height:79px;background:#a8a8a8"></div>
<div class="a" style="left:422px;top:372px;width:1px;height:79px;background:#a8a8a8"></div>
<div class="a" style="left:522px;top:372px;width:1px;height:79px;background:#a8a8a8"></div>
<div class="a" style="left:572px;top:372px;width:1px;height:79px;background:#a8a8a8"></div>
<div class="a" style="left:662px;top:372px;width:1px;height:79px;background:#a8a8a8"></div>
<div class="a" style="left:752px;top:372px;width:1px;height:79px;background:#a8a8a8"></div>
<div class="a" style="left:842px;top:372px;width:1px;height:79px;background:#a8a8a8"></div>
<div class="a" style="left:922px;top:372px;width:1px;height:79px;background:#a8a8a8"></div>
<div class="a" style="left:992px;top:372px;width:1px;height:79px;background:#a8a8a8"></div>
<div class="t" style="left:63px;width:37px;text-align:center;top:379.5px;font-size:13px;color:#000;">1</div>
<svg class="a" style="left:106px;top:379px" width="12" height="12" viewBox="0 0 12 12"><path d="M4.5 0.5 H7.5 V4.5 H11.5 V7.5 H7.5 V11.5 H4.5 V7.5 H0.5 V4.5 H4.5 Z" fill="#0a6af0" stroke="#0a1ea0"/></svg>
<div class="t" style="left:140px;width:102px;text-align:center;top:379.5px;font-size:13px;color:#000;">材料</div>
<div class="t" style="left:245px;top:379.5px;font-size:13px;color:#000;">现浇混凝土</div>
<div class="t" style="left:325px;top:379.5px;font-size:13px;color:#000;">C15现浇混凝土</div>
<div class="t" style="left:425px;top:379.5px;font-size:13px;color:#000;">碎石＜40</div>
<div class="t" style="left:522px;width:50px;text-align:center;top:378.5px;font-size:14px;color:#000;">m3</div>
<div class="t" style="left:845px;top:378.5px;font-size:14px;color:#000;">486.725663</div>
<div class="t" style="left:922px;width:68px;text-align:right;top:378.5px;font-size:14px;color:#000;">500</div>
<div class="a" style="left:54px;top:385px;width:9px;height:1px;background:repeating-linear-gradient(90deg,#808080 0 1px,transparent 1px 2px)"></div>
<div class="t" style="left:63px;width:37px;text-align:center;top:405.5px;font-size:13px;color:#000;">2</div>
<svg class="a" style="left:106px;top:405px" width="12" height="12" viewBox="0 0 12 12"><path d="M4.5 0.5 H7.5 V4.5 H11.5 V7.5 H7.5 V11.5 H4.5 V7.5 H0.5 V4.5 H4.5 Z" fill="#0a6af0" stroke="#0a1ea0"/></svg>
<div class="t" style="left:140px;width:102px;text-align:center;top:405.5px;font-size:13px;color:#000;">材料</div>
<div class="t" style="left:245px;top:405.5px;font-size:13px;color:#000;">现浇混凝土</div>
<div class="t" style="left:325px;top:405.5px;font-size:13px;color:#000;">C20现浇混凝土</div>
<div class="t" style="left:425px;top:405.5px;font-size:13px;color:#000;">碎石＜16</div>
<div class="t" style="left:522px;width:50px;text-align:center;top:404.5px;font-size:14px;color:#000;">m3</div>
<div class="t" style="left:845px;top:404.5px;font-size:14px;color:#000;">398.230088</div>
<div class="t" style="left:922px;width:68px;text-align:right;top:404.5px;font-size:14px;color:#000;">500</div>
<div class="a" style="left:54px;top:411px;width:9px;height:1px;background:repeating-linear-gradient(90deg,#808080 0 1px,transparent 1px 2px)"></div>
<div class="t" style="left:63px;width:37px;text-align:center;top:431.5px;font-size:13px;color:#000;">3</div>
<svg class="a" style="left:106px;top:431px" width="12" height="12" viewBox="0 0 12 12"><path d="M4.5 0.5 H7.5 V4.5 H11.5 V7.5 H7.5 V11.5 H4.5 V7.5 H0.5 V4.5 H4.5 Z" fill="#0a6af0" stroke="#0a1ea0"/></svg>
<div class="t" style="left:140px;width:102px;text-align:center;top:431.5px;font-size:13px;color:#000;">材料</div>
<div class="t" style="left:245px;top:431.5px;font-size:13px;color:#000;">现浇混凝土</div>
<div class="t" style="left:325px;top:431.5px;font-size:13px;color:#000;">C30现浇混凝土</div>
<div class="t" style="left:425px;top:431.5px;font-size:13px;color:#000;">碎石＜40</div>
<div class="t" style="left:522px;width:50px;text-align:center;top:430.5px;font-size:14px;color:#000;">m3</div>
<div class="t" style="left:845px;top:430.5px;font-size:14px;color:#000;">442.477876</div>
<div class="t" style="left:922px;width:68px;text-align:right;top:430.5px;font-size:14px;color:#000;">500</div>
<div class="a" style="left:54px;top:437px;width:9px;height:1px;background:repeating-linear-gradient(90deg,#808080 0 1px,transparent 1px 2px)"></div>
<div class="a" style="left:54px;top:385px;width:1px;height:53px;background:repeating-linear-gradient(180deg,#808080 0 1px,transparent 1px 2px)"></div>
<div class="a" style="left:46px;top:533px;width:1022px;height:1px;background:#b8b8b4"></div>
<div class="a" style="left:44px;top:534px;width:1025px;height:29px;background:#f0f0ec"></div>
<div class="a" style="left:46px;top:563px;width:1022px;height:1px;background:#c4c4c0"></div>
<div class="a" style="left:1068px;top:346px;width:1px;height:217px;background:#a0a0a0"></div>
<div class="a" style="left:925px;top:536px;width:66px;height:25px;border:1px solid #c8c8c4;background:#f0f0ec"></div>
<div class="t" style="left:925px;width:63px;text-align:right;top:542.5px;font-size:14px;color:#000;">1500.00</div>
<div class="a" style="left:63px;top:572px;width:293px;height:2px;background:#8a8a8a"></div>
<div class="a" style="left:44px;top:346px;width:2px;height:235px;background:#a0a0a0"></div>
<div class="a" style="left:44px;top:581px;width:1025px;height:1px;background:#a0a0a0"></div>
<div class="a" style="left:44px;top:582px;width:1025px;height:1px;background:#fdfdfb"></div>
<div class="t" style="left:62.5px;top:593.5px;font-size:12.5px;color:#000;">审核流程</div>
<div class="a" style="left:122px;top:589px;width:343px;height:18px;background:#f7f9e4;border:1px solid #e6e6e2;border-bottom:1px solid #7f7f7f;border-radius:2px"></div>
<svg class="a" style="left:472px;top:594px" width="16" height="10" viewBox="0 0 16 10" shape-rendering="crispEdges"><rect x="7" y="0" width="3" height="1" fill="#000"/><rect x="6" y="1" width="1" height="1" fill="#000"/><rect x="7" y="1" width="1" height="1" fill="#d4f000"/><rect x="8" y="1" width="1" height="1" fill="#f4fab0"/><rect x="9" y="1" width="1" height="1" fill="#d4f000"/><rect x="11" y="1" width="5" height="1" fill="#000"/><rect x="1" y="2" width="8" height="1" fill="#000"/><rect x="9" y="2" width="2" height="1" fill="#d4f000"/><rect x="11" y="2" width="1" height="1" fill="#000"/><rect x="12" y="2" width="1" height="1" fill="#00eef8"/><rect x="13" y="2" width="3" height="1" fill="#000"/><rect x="0" y="3" width="1" height="1" fill="#000"/><rect x="1" y="3" width="1" height="1" fill="#d4f000"/><rect x="2" y="3" width="1" height="1" fill="#f4fab0"/><rect x="3" y="3" width="1" height="1" fill="#d4f000"/><rect x="4" y="3" width="1" height="1" fill="#f4fab0"/><rect x="5" y="3" width="1" height="1" fill="#d4f000"/><rect x="6" y="3" width="1" height="1" fill="#f4fab0"/><rect x="7" y="3" width="4" height="1" fill="#d4f000"/><rect x="11" y="3" width="1" height="1" fill="#000"/><rect x="12" y="3" width="1" height="1" fill="#00eef8"/><rect x="13" y="3" width="3" height="1" fill="#000"/><rect x="1" y="4" width="6" height="1" fill="#000"/><rect x="7" y="4" width="1" height="1" fill="#d4f000"/><rect x="8" y="4" width="1" height="1" fill="#f4fab0"/><rect x="9" y="4" width="1" height="1" fill="#d4f000"/><rect x="10" y="4" width="1" height="1" fill="#f4fab0"/><rect x="11" y="4" width="1" height="1" fill="#000"/><rect x="12" y="4" width="1" height="1" fill="#00eef8"/><rect x="13" y="4" width="3" height="1" fill="#000"/><rect x="3" y="5" width="1" height="1" fill="#000"/><rect x="4" y="5" width="1" height="1" fill="#d4f000"/><rect x="5" y="5" width="1" height="1" fill="#f4fab0"/><rect x="6" y="5" width="1" height="1" fill="#d4f000"/><rect x="7" y="5" width="1" height="1" fill="#f4fab0"/><rect x="8" y="5" width="1" height="1" fill="#d4f000"/><rect x="9" y="5" width="1" height="1" fill="#f4fab0"/><rect x="10" y="5" width="1" height="1" fill="#d4f000"/><rect x="11" y="5" width="1" height="1" fill="#000"/><rect x="12" y="5" width="1" height="1" fill="#00eef8"/><rect x="13" y="5" width="3" height="1" fill="#000"/><rect x="4" y="6" width="3" height="1" fill="#000"/><rect x="7" y="6" width="1" height="1" fill="#d4f000"/><rect x="8" y="6" width="1" height="1" fill="#f4fab0"/><rect x="9" y="6" width="1" height="1" fill="#d4f000"/><rect x="10" y="6" width="1" height="1" fill="#f4fab0"/><rect x="11" y="6" width="1" height="1" fill="#000"/><rect x="12" y="6" width="1" height="1" fill="#00eef8"/><rect x="13" y="6" width="3" height="1" fill="#000"/><rect x="4" y="7" width="1" height="1" fill="#000"/><rect x="5" y="7" width="1" height="1" fill="#d4f000"/><rect x="6" y="7" width="1" height="1" fill="#f4fab0"/><rect x="7" y="7" width="1" height="1" fill="#d4f000"/><rect x="8" y="7" width="1" height="1" fill="#f4fab0"/><rect x="9" y="7" width="1" height="1" fill="#d4f000"/><rect x="10" y="7" width="2" height="1" fill="#000"/><rect x="12" y="7" width="1" height="1" fill="#00eef8"/><rect x="13" y="7" width="3" height="1" fill="#000"/><rect x="5" y="8" width="5" height="1" fill="#000"/><rect x="11" y="8" width="3" height="1" fill="#000"/><rect x="14" y="8" width="1" height="1" fill="#d4f000"/><rect x="15" y="8" width="1" height="1" fill="#000"/><rect x="13" y="9" width="3" height="1" fill="#000"/></svg>
<svg class="a" style="left:499px;top:588px" width="22" height="20" viewBox="0 0 22 20" shape-rendering="crispEdges">
<polygon points="9,10.5 17.5,2 19.5,1 19.5,6 12.5,13.5 11,13.5" fill="#000" shape-rendering="auto"/>
<polygon points="10.2,10.5 13,7.7 15.3,10 12.5,12.8" fill="#f00000" shape-rendering="auto"/>
<polygon points="13.3,7.4 17.8,2.9 19,2 19,5.8 15.6,9.7" fill="#d0f000" shape-rendering="auto"/>
<rect x="14" y="6" width="1" height="1" fill="#000"/><rect x="16" y="6" width="1" height="1" fill="#000"/><rect x="15" y="7" width="1" height="1" fill="#000"/><rect x="17" y="7" width="1" height="1" fill="#000"/><rect x="14" y="8" width="1" height="1" fill="#000"/><rect x="16" y="5" width="1" height="1" fill="#000"/>
<rect x="6" y="4" width="1" height="1" fill="#000"/><rect x="7" y="6" width="1" height="1" fill="#000"/><rect x="8" y="8" width="1" height="1" fill="#000"/><rect x="7" y="9" width="1" height="1" fill="#000"/><rect x="7" y="11" width="1" height="1" fill="#000"/><rect x="12" y="15" width="1" height="1" fill="#000"/><rect x="14" y="16" width="1" height="1" fill="#000"/>
<path d="M4 8h3v1h-1v1h-2z" fill="#000"/>
<path d="M6 12h2v1h1v5h3v1h-9v-3h1v-2h1v-1h1z" fill="#000"/>
<path d="M6 14h2v3h-3v-1h1z" fill="#fff"/>
</svg>
<div class="t" style="left:531px;top:592.995px;font-size:12.01px;color:#fa0000;letter-spacing:0.15px">注：选择审核流程后可自动发起</div>
<div class="a" style="left:44px;top:613px;width:1025px;height:1px;background:#a0a0a0"></div>
<div class="a" style="left:44px;top:614px;width:1025px;height:1px;background:#fdfdfb"></div>
<div class="a" style="left:54px;top:623px;width:43px;height:19px;background:#33ff99;border-bottom:1px solid #a0a0a0;border-right:1px solid #d0d0d0"></div>
<div class="t" style="left:53.5px;top:626.0px;font-size:12.5px;color:#000;">无预算</div>
<div class="a" style="left:102px;top:623px;width:43px;height:19px;background:#ffffff;border-bottom:1px solid #a0a0a0;border-right:1px solid #d0d0d0"></div>
<div class="t" style="left:101.5px;top:626.0px;font-size:12.5px;color:#000;">未超支</div>
<div class="a" style="left:150px;top:623px;width:53px;height:19px;background:#fa8070;border-bottom:1px solid #a0a0a0;border-right:1px solid #d0d0d0"></div>
<div class="t" style="left:149.5px;top:626.0px;font-size:12.5px;color:#000;">项目超支</div>
<div class="a" style="left:208px;top:623px;width:53px;height:19px;background:#ffd8d2;border-bottom:1px solid #a0a0a0;border-right:1px solid #d0d0d0"></div>
<div class="t" style="left:207.5px;top:626.0px;font-size:12.5px;color:#000;">部位超支</div>
<div class="a" style="left:266px;top:623px;width:78px;height:19px;background:#ffd2a0;border-bottom:1px solid #a0a0a0;border-right:1px solid #d0d0d0"></div>
<div class="t" style="left:265.5px;top:626.0px;font-size:12.5px;color:#000;">超采购控制价</div>
<div class="a" style="left:359px;top:621px;width:88px;height:23px;background:#fdfdf9;border:1px solid #d0d0cc;border-radius:4px"></div>
<div class="t" style="left:398.5px;top:626.5px;font-size:12.5px;color:#000;">打印</div>
<div class="a" style="left:479px;top:621px;width:87px;height:23px;background:#fdfdf9;border:1px solid #d0d0cc;border-radius:4px"></div>
<div class="t" style="left:519.5px;top:626.5px;font-size:12.5px;color:#000;">保存</div>
<div class="a" style="left:582px;top:621px;width:88px;height:23px;background:#fdfdf9;border:1px solid #d0d0cc;border-radius:4px"></div>
<div class="t" style="left:622.5px;top:626.5px;font-size:12.5px;color:#000;">关闭</div>
<svg class="a" style="left:380px;top:625px" width="18" height="16" viewBox="0 0 18 16">
<path d="M5.5 0.8 H14.5 V2 L13.5 3 V7 H3 L4 5 Z" fill="#fff" stroke="#4a88d8" stroke-width="1"/>
<path d="M7 2.5 H12 M6 4.5 H11" stroke="#c8c8c8" stroke-width="1"/>
<path d="M2 7 H14 L16.5 5.5 V11 L14 14.5 H3 L1.5 13 V8 Z" fill="#a0d0ff" stroke="#3a78d0" stroke-width="1"/>
<path d="M2.5 8.5 H13.5 V10 H2.5 Z" fill="#fff"/>
<path d="M3 13.5 H14 L16.5 11 V6" fill="none" stroke="#0a2a9a" stroke-width="1.4"/>
<rect x="7.5" y="9.8" width="2" height="1.2" fill="#10c020"/><rect x="10.5" y="9.8" width="2" height="1.2" fill="#f01010"/>
</svg>
<svg class="a" style="left:498px;top:622px" width="19" height="21" viewBox="0 0 19 21">
<path d="M1.5 7.5 L4 6 L8.5 11.5 L16 1 L18.5 3.5 L8.5 19.5 L7 19.5 L1.5 12 Z" fill="#0a8a1a" stroke="#10103a" stroke-width="0.9"/>
<path d="M2 8 L8.5 15.5 L17.5 3.5" fill="none" stroke="#30ff50" stroke-width="1" stroke-dasharray="1 1"/>
<path d="M2 7 L4 6 M16 1.5 L18 3" stroke="#30ff50" stroke-width="1"/>
</svg>
<svg class="a" style="left:603px;top:624px" width="18" height="16" viewBox="0 0 18 16">
<rect x="7.5" y="2" width="3.5" height="12" fill="#f0c060" stroke="#d08000" stroke-width="1"/>
<path d="M1.5 2.5 L7.5 0.8 V15 L1.5 13.5 Z" fill="#9ad0ff" stroke="#7050a0" stroke-width="1"/>
<rect x="5.5" y="1.5" width="2" height="13" fill="#fff"/>
<path d="M3 7 A1 1 0 1 0 3 8.5" fill="none" stroke="#403070" stroke-width="0.8"/>
<path d="M8 7.5 L12.5 3 V6 H16.5 V9 H12.5 V12 Z" fill="#0a6ae8"/>
</svg>
<div class="t" style="left:1012.5px;top:631.5px;font-size:12.5px;color:#000;">合计0项</div>
<div class="a" style="left:926px;top:7px;width:98px;height:48px;border:3px solid #f03838"></div>
</body>
</html>
